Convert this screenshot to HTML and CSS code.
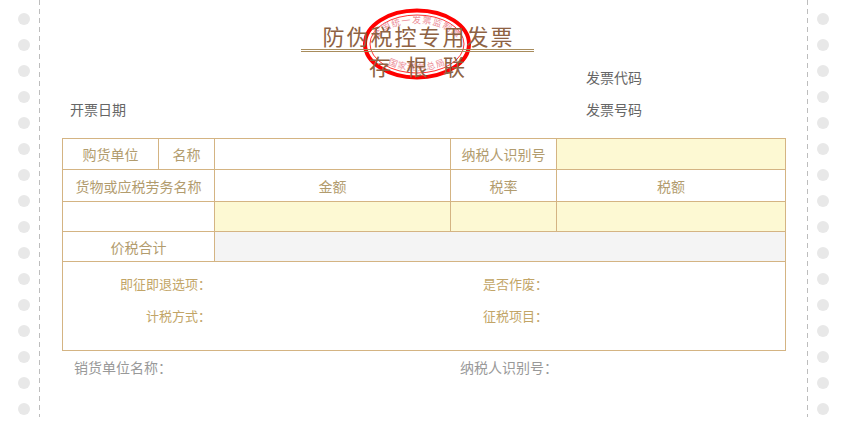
FILE: index.html
```html
<!DOCTYPE html>
<html lang="zh-CN">
<head>
	<meta charset="utf-8">
	<meta name="viewport" content="width=device-width, initial-scale=1">
	<title>防伪税控专用发票 存根联</title>
	<link rel="stylesheet" href="styles.css">
</head>
<body>
<div class="page">
	<div class="strip strip-left">
		<i></i><i></i><i></i><i></i><i></i><i></i><i></i><i></i><i></i><i></i><i></i><i></i><i></i><i></i><i></i><i></i>
	</div>

	<main class="invoice">
		<header class="head">
			<div class="title">
				<svg class="stamp" width="112" height="74" viewBox="0 0 112 74">
					<defs>
						<path id="arc-top" d="M10 46 A46 30 0 0 1 102 46"/>
						<path id="arc-bottom" d="M14 46 A44 25 0 0 0 98 46"/>
					</defs>
					<ellipse class="ring-outer" cx="56" cy="37" rx="52" ry="33.5"/>
					<ellipse class="ring-inner" cx="56" cy="37" rx="47" ry="29"/>
					<text class="stamp-text"><textPath href="#arc-top" startOffset="50%" text-anchor="middle">全国统一发票监制章</textPath></text>
					<text class="stamp-text"><textPath href="#arc-bottom" startOffset="50%" text-anchor="middle">国家税务总局</textPath></text>
				</svg>
				<h1>防伪税控专用发票</h1>
				<div class="rule"></div>
				<h2>存根联</h2>
			</div>
			<div class="date">开票日期</div>
			<div class="code">发票代码</div>
			<div class="number">发票号码</div>
		</header>

		<table class="sheet">
			<colgroup>
				<col class="col-a"><col class="col-b"><col class="col-c"><col class="col-d"><col class="col-e">
			</colgroup>
			<tr class="row-1">
				<td>购货单位</td>
				<td>名称</td>
				<td></td>
				<td>纳税人识别号</td>
				<td class="fill"></td>
			</tr>
			<tr class="row-2">
				<td colspan="2">货物或应税劳务名称</td>
				<td>金额</td>
				<td>税率</td>
				<td>税额</td>
			</tr>
			<tr class="row-3">
				<td colspan="2"></td>
				<td class="fill"></td>
				<td class="fill"></td>
				<td class="fill"></td>
			</tr>
			<tr class="row-4">
				<td colspan="2">价税合计</td>
				<td colspan="3" class="grey"></td>
			</tr>
			<tr class="row-5">
				<td colspan="5" class="extra">
					<div class="fields">
						<span>即征即退选项：</span><span>是否作废：</span>
						<span>计税方式：</span><span>征税项目：</span>
					</div>
				</td>
			</tr>
		</table>

		<footer class="seller">
			<span>销货单位名称：</span>
			<span>纳税人识别号：</span>
		</footer>
	</main>

	<div class="strip strip-right">
		<i></i><i></i><i></i><i></i><i></i><i></i><i></i><i></i><i></i><i></i><i></i><i></i><i></i><i></i><i></i><i></i>
	</div>
</div>
</body>
</html>
```

FILE: styles.css
```css
:root
{
	--line: #d4b483;
	--label: #b29c6e;
	--label-light: #c2a567;
	--fill: #fdf9d3;
	--dash: #bdbdbd;
}

html,body
{
	padding: 0;
	margin: 0;
	background: #fff;
}

body
{
	font-family: "Noto Sans CJK SC", "Liberation Sans", sans-serif;
	font-size: 14px;
}

.page
{
	display: flex;
	width: 844px;
	height: 429px;
	overflow: hidden;
}

.strip
{
	display: flex;
	flex-direction: column;
	flex: none;
	gap: 14px;
	height: 417px;
	padding-top: 13px;
	box-sizing: border-box;
	background-repeat: no-repeat;
	background-size: 1px 100%;
	background-image: repeating-linear-gradient(to bottom, var(--dash) 0 5px, transparent 5px 9px);
}

.strip-left
{
	width: 40px;
	padding-left: 18px;
	background-position: right top;
}

.strip-right
{
	width: 37px;
	padding-left: 10px;
	background-position: left top;
}

.strip i
{
	display: block;
	flex: none;
	width: 12px;
	height: 12px;
	border-radius: 50%;
	background: #e8e8e8;
}

.invoice
{
	flex: none;
	width: 767px;
}

.head
{
	display: grid;
	grid-template-columns: 546px 1fr;
	grid-template-rows: 61px 32px 32px 13px;
	color: #666;
	line-height: 32px;
}

.title
{
	position: relative;
	grid-column: 1 / -1;
	grid-row: 1 / -1;
	justify-self: start;
	width: 233px;
	height: 80px;
	margin-left: 261px;
	padding-top: 20px;
	box-sizing: border-box;
	color: #8e6243;
	text-align: center;
}

.stamp
{
	position: absolute;
	top: 7px;
	left: 60px;
}

.ring-outer
{
	fill: none;
	stroke: #f00;
	stroke-width: 4;
}

.ring-inner
{
	fill: none;
	stroke: #f00;
	stroke-width: 0.8;
}

.stamp-text
{
	fill: #ec8f9a;
	font-size: 9px;
	letter-spacing: 1px;
}

.title h1,
.title h2
{
	position: relative;
	margin: 0;
	font-weight: 400;
}

.title h1
{
	padding-left: 2px;
	font-size: 22px;
	letter-spacing: 2px;
	line-height: 30px;
}

.title h2
{
	padding-left: 14px;
	font-size: 22px;
	letter-spacing: 15px;
	line-height: 26px;
}

.rule
{
	position: relative;
	height: 1px;
	border-top: 1px solid #a88c5c;
	border-bottom: 1px solid #a88c5c;
	margin-top: -1px;
}

.date
{
	grid-column: 1;
	grid-row: 3;
	padding-left: 30px;
}

.code
{
	grid-column: 2;
	grid-row: 2;
}

.number
{
	grid-column: 2;
	grid-row: 3;
}

.sheet
{
	width: 724px;
	border-collapse: collapse;
	margin-left: 22px;
	color: var(--label);
	table-layout: fixed;
	text-align: center;
}

.sheet td
{
	padding: 0;
	border: 1px solid var(--line);
}

.col-a { width: 96px; }
.col-b { width: 56px; }
.col-c { width: 236px; }
.col-d { width: 106px; }
.col-e { width: 229px; }

.row-1 { height: 31px; }
.row-2 { height: 32px; }
.row-3 { height: 30px; }
.row-4 { height: 30px; }
.row-5 { height: 89px; }

.sheet .fill
{
	background: var(--fill);
}

.sheet .grey
{
	background: #f4f4f4;
}

.fields
{
	display: grid;
	grid-template-columns: 148px 337px;
	grid-auto-rows: 32px;
	padding-bottom: 12px;
	color: var(--label-light);
	font-size: 13px;
	line-height: 32px;
	text-align: right;
}

.seller
{
	display: grid;
	grid-template-columns: 386px 1fr;
	padding: 6px 0 0 34px;
	color: #999;
	line-height: 20px;
}
```
